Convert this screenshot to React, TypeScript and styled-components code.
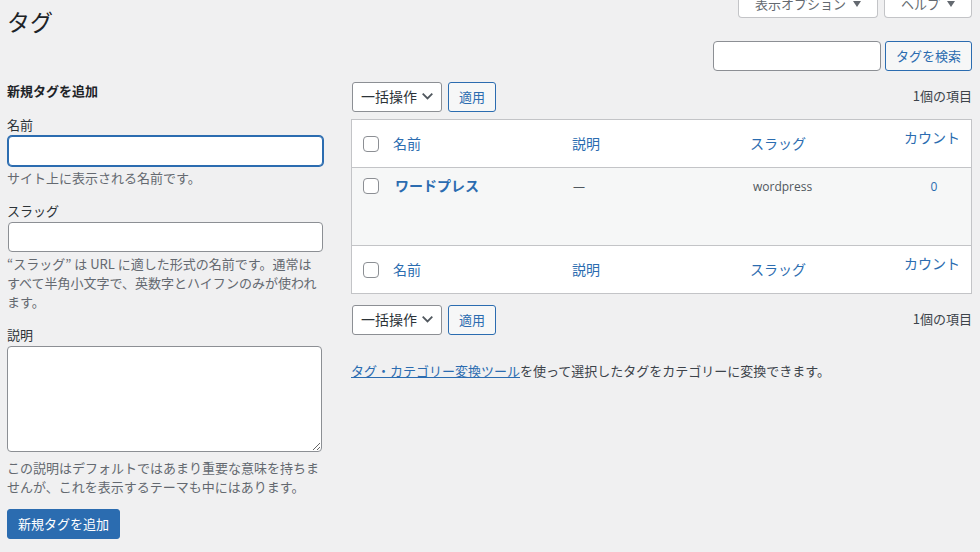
import React from "react";
import styled, { createGlobalStyle } from "styled-components";

const Blue = "#2b6cb0";

const Global = createGlobalStyle`
  html, body { margin: 0; padding: 0; background: #f0f0f1; }
  body { font-family: "Open Sans", "Noto Sans CJK JP", sans-serif; font-size: 13px; color: #3c434a; overflow: hidden; }
  * { box-sizing: border-box; }
`;

const Page = styled.div`
  width: 980px;
  height: 552px;
  overflow: hidden;
  padding: 0 8px 0 7px;
  background: #f0f0f1;
`;

const MetaLinks = styled.div`
  display: flex;
  justify-content: flex-end;
  gap: 6px;
  height: 18px;
  align-items: flex-end;
`;

const MetaTab = styled.button<{ $w: number }>`
  width: ${(p) => p.$w}px;
  height: 30px;
  flex: none;
  background: #fff;
  border: 1px solid #c3c4c7;
  border-top: none;
  border-radius: 0 0 4px 4px;
  color: #646970;
  font: 13px/24px "Open Sans", "Noto Sans CJK JP", sans-serif;
  padding: 2px 0 0;
  display: flex;
  align-items: center;
  justify-content: center;
  gap: 7px;
`;

const Arrow = styled.span`
  display: block;
  width: 0;
  height: 0;
  margin-top: 1px;
  border-left: 4.5px solid transparent;
  border-right: 4.5px solid transparent;
  border-top: 6px solid #646970;
`;

const Title = styled.h1`
  margin: -16px 0 0;
  height: 37px;
  font: 400 23px/38px "Noto Sans CJK JP", sans-serif;
  color: #1d2327;
`;

const SearchRow = styled.div`
  display: flex;
  justify-content: flex-end;
  gap: 4px;
  margin-top: 2px;
`;

const TextInput = styled.input<{ $w: number; $focus?: boolean; $inset?: boolean }>`
  display: block;
  width: ${(p) => p.$w}px;
  height: 30px;
  margin: 0 0 0 ${(p) => (p.$inset ? 1 : 0)}px;
  background: #fff;
  border: 1px solid ${(p) => (p.$focus ? Blue : "#8c8f94")};
  border-radius: 4px;
  box-shadow: ${(p) => (p.$focus ? `0 0 0 1px ${Blue}` : "none")};
  outline: none;
`;

const OutlineButton = styled.button<{ $w: number }>`
  width: ${(p) => p.$w}px;
  height: 30px;
  flex: none;
  background: #f6f7f7;
  border: 1px solid ${Blue};
  border-radius: 3px;
  color: ${Blue};
  font: 13px/28px "Noto Sans CJK JP", sans-serif;
  padding: 0;
`;

const Columns = styled.div`
  display: grid;
  grid-template-columns: 316px 621px;
  column-gap: 28px;
  margin-top: 10px;
`;

const FormCol = styled.form`
  display: flex;
  flex-direction: column;
`;

const FormTitle = styled.h2`
  margin: 0;
  font: 700 13px/20px "Noto Sans CJK JP", sans-serif;
  color: #1d2327;
`;

const Label = styled.label<{ $top: number }>`
  display: block;
  margin-top: ${(p) => p.$top}px;
  padding-bottom: 2px;
  font: 13px/19px "Noto Sans CJK JP", sans-serif;
  color: #2c3338;
`;

const Hint = styled.p<{ $top: number }>`
  margin: ${(p) => p.$top}px 0 0;
  font: 13px/19px "Noto Sans CJK JP", sans-serif;
  color: #646970;
`;

const Area = styled.textarea`
  display: block;
  width: 315px;
  height: 106px;
  background: #fff;
  border: 1px solid #8c8f94;
  border-radius: 4px;
  outline: none;
  margin: 0;
`;

const PrimaryButton = styled.button`
  align-self: flex-start;
  width: 113px;
  height: 30px;
  margin-top: 13px;
  background: ${Blue};
  border: 1px solid ${Blue};
  border-radius: 3px;
  color: #fff;
  font: 13px/28px "Noto Sans CJK JP", sans-serif;
  padding: 0;
`;

const ListCol = styled.div`
  display: flex;
  flex-direction: column;
`;

const TableNav = styled.div<{ $top: number; $bottom: number }>`
  display: flex;
  align-items: center;
  gap: 6px;
  margin: ${(p) => p.$top}px 0 ${(p) => p.$bottom}px 1px;
`;

const BulkSelect = styled.div`
  width: 90px;
  height: 30px;
  background: #fff;
  border: 1px solid #8c8f94;
  border-radius: 3px;
  color: #2c3338;
  font: 14px/28px "Noto Sans CJK JP", sans-serif;
  padding: 0 8px 2px;
  display: flex;
  align-items: center;
  justify-content: space-between;
`;

const Count = styled.span`
  margin-left: auto;
  padding-bottom: 2px;
  font: 13px/20px "Noto Sans CJK JP", sans-serif;
  color: #3c434a;
`;

const Table = styled.table`
  width: 621px;
  table-layout: fixed;
  border-collapse: separate;
  border-spacing: 0;
  background: #fff;
  border: 1px solid #c3c4c7;
`;

const CheckCell = styled.td<{ $edge: "head" | "body" | "foot" }>`
  width: 32px;
  padding: ${(p) => (p.$edge === "body" ? "10px 0 0 11px" : "0 0 0 11px")};
  vertical-align: ${(p) => (p.$edge === "body" ? "top" : "middle")};
  border-bottom: ${(p) => (p.$edge === "head" ? "1px solid #c3c4c7" : "none")};
  border-top: ${(p) => (p.$edge === "foot" ? "1px solid #c3c4c7" : "none")};
`;

const HeadCell = styled.td<{ $w?: number; $edge: "head" | "foot" }>`
  ${(p) => (p.$w ? `width: ${p.$w}px;` : "")}
  padding: 0 0 2px 9px;
  vertical-align: middle;
  font: 14px/20px "Noto Sans CJK JP", sans-serif;
  color: ${Blue};
  border-bottom: ${(p) => (p.$edge === "head" ? "1px solid #c3c4c7" : "none")};
  border-top: ${(p) => (p.$edge === "foot" ? "1px solid #c3c4c7" : "none")};
`;

const CountHead = styled(HeadCell)`
  vertical-align: top;
  padding: 7px 11px 0 0;
  text-align: right;
`;

const HeadRow = styled.tr<{ $h: number }>`
  height: ${(p) => p.$h}px;
`;

const BodyRow = styled.tr`
  height: 77px;
  background: #f6f7f7;
`;

const BodyCell = styled.td<{ $pad?: number; $top?: number; $center?: boolean }>`
  padding: ${(p) => p.$top ?? 9}px 0 0 ${(p) => p.$pad ?? 10}px;
  vertical-align: top;
  font: 12px/20px "Open Sans", "Noto Sans CJK JP", sans-serif;
  color: #50575e;
  text-align: ${(p) => (p.$center ? "center" : "left")};
`;

const TagName = styled.a`
  font: 700 14px/20px "Noto Sans CJK JP", sans-serif;
  color: ${Blue};
`;

const CountLink = styled.a`
  color: ${Blue};
`;

const Box = styled.span`
  display: block;
  width: 16px;
  height: 16px;
  background: #fff;
  border: 1px solid #8c8f94;
  border-radius: 4px;
`;

const Note = styled.p`
  margin: 26px 0 0;
  font: 13px/20px "Noto Sans CJK JP", sans-serif;
  color: #3c434a;
`;

const NoteLink = styled.a`
  color: ${Blue};
  text-decoration: underline;
`;

function Chevron() {
  return (
    <svg width="11" height="7" viewBox="0 0 11 7" fill="none">
      <path d="M.7.7l4.8 4.8L10.3.7" stroke="#50575e" strokeWidth="1.8" />
    </svg>
  );
}

function Nav({ top, bottom }: { top: number; bottom: number }) {
  return (
    <TableNav $top={top} $bottom={bottom}>
      <BulkSelect>
        一括操作
        <Chevron />
      </BulkSelect>
      <OutlineButton $w={48} type="button">適用</OutlineButton>
      <Count>1個の項目</Count>
    </TableNav>
  );
}

function HeadCells({ edge }: { edge: "head" | "foot" }) {
  return (
    <HeadRow $h={48}>
      <CheckCell $edge={edge}><Box /></CheckCell>
      <HeadCell $edge={edge} $w={179}>名前</HeadCell>
      <HeadCell $edge={edge} $w={178}>説明</HeadCell>
      <HeadCell $edge={edge} $w={154}>スラッグ</HeadCell>
      <CountHead $edge={edge}>カウント</CountHead>
    </HeadRow>
  );
}

export default function App() {
  return (
    <Page>
      <Global />
      <MetaLinks>
        <MetaTab $w={140} type="button">表示オプション<Arrow /></MetaTab>
        <MetaTab $w={88} type="button">ヘルプ<Arrow /></MetaTab>
      </MetaLinks>
      <Title>タグ</Title>
      <SearchRow>
        <TextInput $w={168} />
        <OutlineButton $w={87} type="button">タグを検索</OutlineButton>
      </SearchRow>
      <Columns>
        <FormCol>
          <FormTitle>新規タグを追加</FormTitle>
          <Label $top={14}>名前</Label>
          <TextInput $w={315} $focus $inset />
          <Hint $top={2}>サイト上に表示される名前です。</Hint>
          <Label $top={14}>スラッグ</Label>
          <TextInput $w={315} $inset />
          <Hint $top={2}>“スラッグ” は URL に適した形式の名前です。通常はすべて半角小文字で、英数字とハイフンのみが使われます。</Hint>
          <Label $top={14}>説明</Label>
          <Area />
          <Hint $top={6}>この説明はデフォルトではあまり重要な意味を持ちませんが、これを表示するテーマも中にはあります。</Hint>
          <PrimaryButton type="button">新規タグを追加</PrimaryButton>
        </FormCol>
        <ListCol>
          <Nav top={1} bottom={7} />
          <Table>
            <thead><HeadCells edge="head" /></thead>
            <tbody>
              <BodyRow>
                <CheckCell $edge="body"><Box /></CheckCell>
                <BodyCell $pad={11} $top={7}><TagName>ワードプレス</TagName></BodyCell>
                <BodyCell>—</BodyCell>
                <BodyCell $pad={12}>wordpress</BodyCell>
                <BodyCell $center $pad={2}><CountLink>0</CountLink></BodyCell>
              </BodyRow>
            </tbody>
            <tfoot><HeadCells edge="foot" /></tfoot>
          </Table>
          <Nav top={11} bottom={0} />
          <Note><NoteLink>タグ・カテゴリー変換ツール</NoteLink>を使って選択したタグをカテゴリーに変換できます。</Note>
        </ListCol>
      </Columns>
    </Page>
  );
}
